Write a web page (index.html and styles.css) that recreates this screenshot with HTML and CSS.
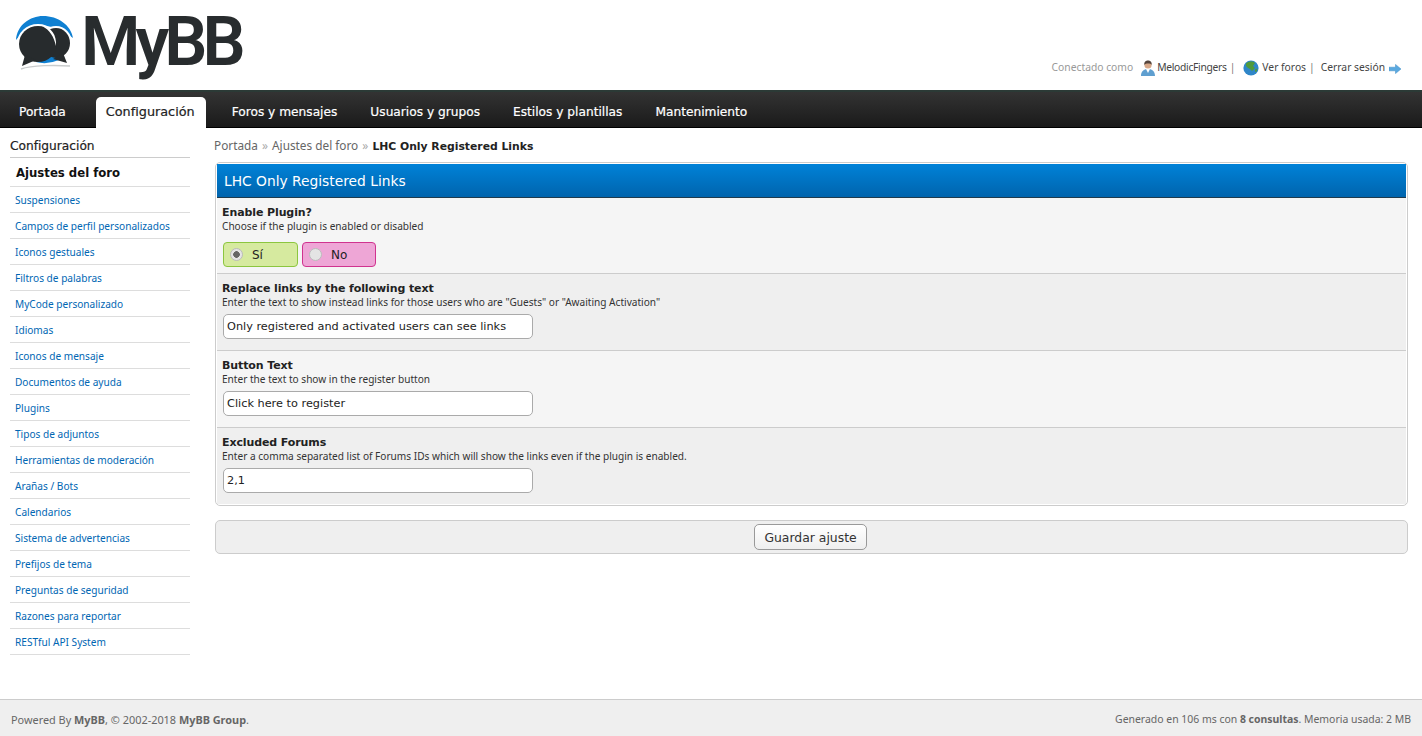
FILE: index.html
```html
<!DOCTYPE html>
<html lang="es">
<head>
<meta charset="utf-8">
<title>LHC Only Registered Links</title>
<link rel="stylesheet" href="styles.css">
</head>
<body>
<header class="top">
  <a class="logo" href="#">
    <svg class="logo-mark" width="58" height="56" viewBox="0 0 58 56" aria-hidden="true">
      <path d="M0 25C1 10 14 1 27 1C42 1 55 10 57 23L50 18C40 9 16 9 5 19Z" fill="#0f80d2"/>
      <g fill="#fff" stroke="#fff" stroke-width="4" stroke-linejoin="round">
        <ellipse cx="22" cy="29" rx="19" ry="18"/>
        <ellipse cx="40" cy="28" rx="14" ry="15"/>
        <path d="M9 39L5 52L21 46Z"/>
        <path d="M46 38L52 49L36 45Z"/>
      </g>
      <path d="M5 54C16 50 40 50 54 51" fill="none" stroke="#c9cccd" stroke-width="1.5"/>
      <path d="M20 47Q31 50 43 45L42 41H20Z" fill="#0f80d2"/>
      <ellipse cx="40" cy="28" rx="14" ry="15" fill="#272b2d"/>
      <path d="M47 38L51 48L37 44Z" fill="#272b2d"/>
      <ellipse cx="22" cy="29" rx="19" ry="18" fill="#272b2d"/>
      <path d="M9 40L6 51L20 45Z" fill="#272b2d"/>
      <path d="M26 11C35 12 41 20 40 31C38 22 34 15 26 11Z" fill="#fff"/>
    </svg>
    <span class="logo-text">MyBB</span>
  </a>
  <div class="welcome">
    <span class="muted">Conectado como</span>
    <svg class="ico ico-user" width="16" height="16" viewBox="0 0 16 16" aria-hidden="true">
      <path d="M1 16C1 11 4 10 6 9H10C12 10 15 11 15 16Z" fill="#5f9fd0"/>
      <path d="M6 9L8 13L10 9Z" fill="#fff"/>
      <circle cx="8" cy="5" r="3.6" fill="#d8a888"/>
      <path d="M4.3 5C4 1.5 6 .5 8 .5S12 1.5 11.7 5C10.5 3.2 6 3 4.3 5Z" fill="#54443c"/>
    </svg>
    <a class="wlink user-link" href="#">MelodicFingers</a><span class="sep">|</span>
    <svg class="ico ico-globe" width="16" height="16" viewBox="0 0 16 16" aria-hidden="true">
      <circle cx="8" cy="8" r="7.6" fill="#2f86c8"/>
      <path d="M3 3.5C6 1 10 1 12 3L10 6L12 8L9 11L7 9L5 8L3 6Z" fill="#4f9a3c"/>
      <path d="M12 9.5L14.5 8.5L13.5 12L12 11.5Z" fill="#4f9a3c"/>
    </svg>
    <a class="wlink" href="#">Ver foros</a><span class="sep">|</span>
    <a class="wlink logout" href="#">Cerrar sesión</a>
    <svg class="ico-arrow" width="12" height="10" viewBox="0 0 12 10" aria-hidden="true">
      <path d="M0 3.2H6.5V.4L12 5L6.5 9.6V6.8H0Z" fill="#5aa9e0" stroke="#3f8cc6" stroke-width=".5"/>
    </svg>
  </div>
</header>

<nav class="menu">
  <a class="tab" href="#">Portada</a>
  <a class="tab active" href="#">Configuración</a>
  <a class="tab" href="#">Foros y mensajes</a>
  <a class="tab" href="#">Usuarios y grupos</a>
  <a class="tab" href="#">Estilos y plantillas</a>
  <a class="tab" href="#">Mantenimiento</a>
</nav>

<div class="page">
  <aside class="side">
    <h2 class="side-title">Configuración</h2>
    <ul class="side-list">
      <li class="side-item current"><a href="#">Ajustes del foro</a></li>
      <li class="side-item"><a href="#">Suspensiones</a></li>
      <li class="side-item"><a href="#">Campos de perfil personalizados</a></li>
      <li class="side-item"><a href="#">Iconos gestuales</a></li>
      <li class="side-item"><a href="#">Filtros de palabras</a></li>
      <li class="side-item"><a href="#">MyCode personalizado</a></li>
      <li class="side-item"><a href="#">Idiomas</a></li>
      <li class="side-item"><a href="#">Iconos de mensaje</a></li>
      <li class="side-item"><a href="#">Documentos de ayuda</a></li>
      <li class="side-item"><a href="#">Plugins</a></li>
      <li class="side-item"><a href="#">Tipos de adjuntos</a></li>
      <li class="side-item"><a href="#">Herramientas de moderación</a></li>
      <li class="side-item"><a href="#">Arañas / Bots</a></li>
      <li class="side-item"><a href="#">Calendarios</a></li>
      <li class="side-item"><a href="#">Sistema de advertencias</a></li>
      <li class="side-item"><a href="#">Prefijos de tema</a></li>
      <li class="side-item"><a href="#">Preguntas de seguridad</a></li>
      <li class="side-item"><a href="#">Razones para reportar</a></li>
      <li class="side-item"><a href="#">RESTful API System</a></li>
    </ul>
  </aside>

  <main class="content">
    <div class="crumbs">
      <a href="#">Portada</a> <span class="raquo">»</span> <a href="#">Ajustes del foro</a> <span class="raquo">»</span> <b>LHC Only Registered Links</b>
    </div>

    <section class="panel">
      <h1 class="panel-head">LHC Only Registered Links</h1>
      <div class="row row-a first">
        <div class="label">Enable Plugin?</div>
        <div class="desc">Choose if the plugin is enabled or disabled</div>
        <div class="choices">
          <label class="choice yes"><input class="radio" type="radio" name="en" checked>Sí</label>
          <label class="choice no"><input class="radio" type="radio" name="en">No</label>
        </div>
      </div>
      <div class="row row-b">
        <div class="label">Replace links by the following text</div>
        <div class="desc">Enter the text to show instead links for those users who are "Guests" or "Awaiting Activation"</div>
        <input class="field" type="text" value="Only registered and activated users can see links">
      </div>
      <div class="row row-a">
        <div class="label">Button Text</div>
        <div class="desc">Enter the text to show in the register button</div>
        <input class="field" type="text" value="Click here to register">
      </div>
      <div class="row row-b last">
        <div class="label">Excluded Forums</div>
        <div class="desc">Enter a comma separated list of Forums IDs which will show the links even if the plugin is enabled.</div>
        <input class="field" type="text" value="2,1">
      </div>
    </section>

    <div class="actions">
      <button class="save" type="button">Guardar ajuste</button>
    </div>
  </main>
</div>

<footer class="foot">
  <div class="foot-left">Powered By <b>MyBB</b>, © 2002-2018 <b>MyBB Group</b>.</div>
  <div>Generado en 106 ms con <b>8 consultas</b>. Memoria usada: 2 MB</div>
</footer>
</body>
</html>
```
FILE: styles.css
```css
* { box-sizing: border-box; }
html, body { height: 100%; }
body {
  margin: 0;
  background: #fff;
  color: #333;
  font: 10.1px/13px "Noto Sans", "DejaVu Sans", sans-serif;
  display: flex;
  flex-direction: column;
  overflow: hidden;
}
a { color: inherit; text-decoration: none; }

.top {
  height: 90px;
  flex: none;
  display: flex;
  justify-content: space-between;
  padding: 0 21px 0 16px;
}
.logo { display: flex; align-items: flex-start; color: #282c2e; height: 90px; }
.logo-mark { margin-top: 15px; flex: none; }
.logo-text {
  font: 600 68px/84px Roboto, sans-serif;
  letter-spacing: -5px;
  margin-left: 7px;
}
.welcome {
  align-self: flex-start;
  margin-top: 58px;
  display: flex;
  align-items: center;
  height: 18px;
  color: #444;
  font-size: 10.3px;
}
.muted { color: #999; margin-right: 7px; }
.ico { margin: 2px 1px 0 0; flex: none; }
.user-link { letter-spacing: -.3px; }
.sep { margin: 0 6px 0 3px; color: #777; }
.ico-globe { margin: 2px 3px 0 2px; }
.ico-arrow { margin-left: 4px; margin-top: 3px; }

.menu {
  height: 38px;
  flex: none;
  display: flex;
  align-items: flex-end;
  padding-left: 9px;
  border-top: 2px solid #2b3a36;
  background: linear-gradient(#333, #1a1a1a);
  border-bottom: 1px solid #000;
  font-family: "DejaVu Sans", sans-serif;
  -webkit-text-stroke: .2px;
}
.tab {
  height: 31px;
  line-height: 30px;
  padding: 0 10px;
  margin-right: 13px;
  color: #fff;
  font-size: 12.2px;
  border-radius: 5px 5px 0 0;
  margin-bottom: -1px;
}
.tab.active {
  background: #fff;
  color: #222;
  font-size: 12.8px;
  padding: 0 11px 0 10px;
  margin-left: 7px;
  margin-right: 16px;
}

.page { flex: 1; display: flex; min-height: 0; }
.side { width: 180px; flex: none; margin-left: 10px; padding-top: 9px; }
.side-title {
  margin: 0;
  height: 21px;
  font: 400 12.2px/19px "DejaVu Sans", sans-serif;
  -webkit-text-stroke: .2px;
  color: #222;
  border-bottom: 1px solid #ccc;
}
.side-list { list-style: none; margin: 0; padding: 0; }
.side-item {
  height: 26px;
  line-height: 26px;
  padding-left: 5px;
  border-bottom: 1px solid #ddd;
  color: #0066b3;
}
.side-item.current {
  height: 29px;
  padding-left: 6px;
  font: 700 11.7px/30px "DejaVu Sans", sans-serif;
  color: #111;
}

.content { flex: 1; min-width: 0; padding: 10px 14px 0 25px; }
.crumbs { font-size: 11.8px; line-height: 15px; color: #666; height: 24px; margin-left: -1px; }
.crumbs b { color: #222; font: 700 10.8px "DejaVu Sans", sans-serif; }
.raquo { color: #aaa; margin: 0 1px; }

.panel {
  border: 1px solid #ccc;
  border-radius: 5px;
  overflow: hidden;
  padding: 1px;
}
.panel-head {
  margin: 0;
  height: 34px;
  padding-left: 7px;
  font: 400 13.8px/34px "DejaVu Sans", sans-serif;
  color: #fff;
  background: linear-gradient(#0082d8, #0064ad);
  border-bottom: 1px solid #1f3b4d;
}
.row { padding: 8px 5px 0; border-bottom: 1px solid #ccc; height: 77px; }
.row-a { background: #f5f5f5; }
.row-b { background: #efefef; }
.row.first { height: 76px; }
.row.last { border-bottom: 0; height: 76px; }
.label { font: 700 11px/14px "DejaVu Sans", sans-serif; letter-spacing: -.1px; color: #222; }
.desc { line-height: 12px; color: #333; margin-bottom: 6px; }
.choices { display: flex; gap: 4px; margin: 10px 0 0 1px; }
.choice {
  width: 75px;
  height: 25px;
  display: flex;
  align-items: center;
  border: 1px solid;
  border-radius: 4px;
  font: 12px "DejaVu Sans", sans-serif;
  color: #222;
}
.choice.yes { background: #d6ea9f; border-color: #8cc63f; }
.choice.no { background: #eea6d6; border-color: #d0338f; width: 74px; }
.radio {
  appearance: none;
  width: 13px;
  height: 13px;
  margin: 0 9px 0 6px;
  border: 1px solid #bbb;
  border-radius: 50%;
  background: #e4e4e4;
}
.radio:checked { background: radial-gradient(circle, #666 0 3px, #e4e4e4 3.6px); }
.field {
  display: block;
  width: 310px;
  height: 25px;
  margin-left: 1px;
  padding: 0 3px;
  border: 1px solid #aaa;
  border-radius: 5px;
  background: #fff;
  font: 11.3px "DejaVu Sans", sans-serif;
  color: #222;
  outline: none;
}
.actions {
  margin-top: 14px;
  height: 34px;
  border: 1px solid #ccc;
  border-radius: 5px;
  background: #efefef;
  display: flex;
  align-items: center;
  justify-content: center;
}
.save {
  width: 113px;
  height: 26px;
  margin-right: 2px;
  padding: 0;
  border: 1px solid #999;
  border-radius: 5px;
  background: linear-gradient(#fff, #efefef);
  font: 12.4px "DejaVu Sans", sans-serif;
  color: #333;
}

.foot {
  height: 37px;
  flex: none;
  display: flex;
  justify-content: space-between;
  align-items: center;
  padding: 2px 11px 0;
  background: #efefef;
  border-top: 1px solid #ccc;
  color: #666;
  font-size: 10.45px;
}
.foot-left { font-size: 10.9px; }
```
